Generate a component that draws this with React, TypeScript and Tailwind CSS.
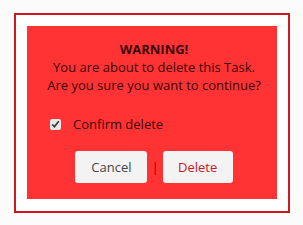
import React, { useState } from 'react'

export default function App() {
  const [confirmed, setConfirmed] = useState(true)

  return (
    <div className="w-[303px] h-[225px] bg-[#fbfbfb] pt-[13px] pl-[14px] font-['Open_Sans',sans-serif]">
      <div className="w-[276px] h-[200px] border-2 border-[#d0161e] bg-white p-[11px]">
        <div className="w-[250px] h-[173px] bg-[#ff3333] flex flex-col items-center pt-[14px] pl-[4px] text-[13px] leading-[18px] text-[#3a0808]">
          <div className="font-bold">WARNING!</div>
          <div>You are about to delete this Task.</div>
          <div>Are you sure you want to continue?</div>

          <label className="self-start flex items-center gap-[12px] ml-[19px] mt-[21px]">
            <input
              type="checkbox"
              checked={confirmed}
              onChange={(e) => setConfirmed(e.target.checked)}
              className="w-[11px] h-[11px] m-0 accent-[#e8e8e8]"
            />
            <span>Confirm delete</span>
          </label>

          <div className="flex items-center mt-[18px]">
            <button className="w-[72px] h-[32px] rounded-[3px] bg-[#f3f3f3] text-[#444]">
              Cancel
            </button>
            <span className="mx-[4px] text-[#7a1010]">|</span>
            <button className="w-[70px] h-[32px] rounded-[3px] bg-[#f3f3f3] text-[#d0161e]">
              Delete
            </button>
          </div>
        </div>
      </div>
    </div>
  )
}
